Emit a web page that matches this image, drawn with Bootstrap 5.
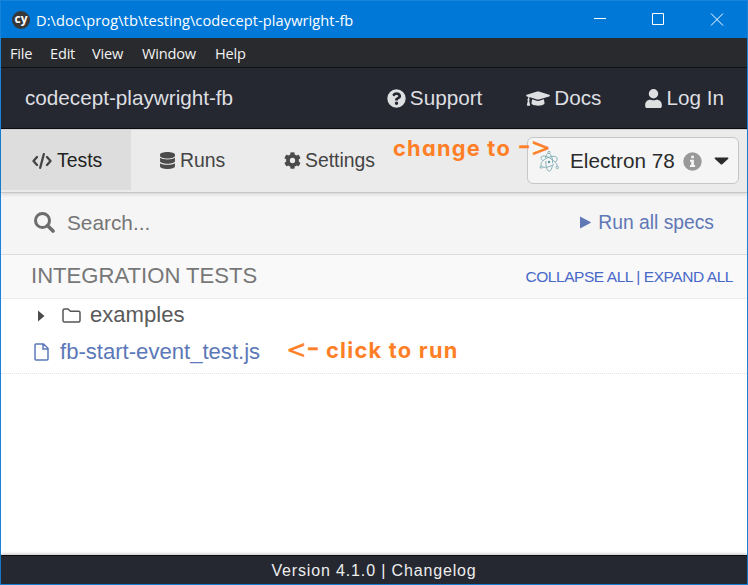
<!DOCTYPE html>
<html lang="en">
<head>
<meta charset="utf-8">
<title>codecept-playwright-fb</title>
<link href="https://cdn.jsdelivr.net/npm/bootstrap@5.3.0/dist/css/bootstrap.min.css" rel="stylesheet">
<style>
html,body{height:100%}
body{font-family:"Liberation Sans",Arial,sans-serif;line-height:1;overflow:hidden;white-space:nowrap}
svg{display:block;flex:none}
a{text-decoration:none;color:inherit}
.app-window{height:585px;border:1px solid #1883d9;border-top-width:0;background:#fff}
.title-bar{height:38px;background:#0078d7;border-top:1px solid #1883d9;color:#fff;font:14.6px "Open Sans","Noto Sans",sans-serif;padding-left:11px}
.path-label{margin-left:6px;width:318px;letter-spacing:.07px}
.window-controls{margin-right:23px;margin-top:-2px}
.menu-strip{height:29px;background:#292a2d;color:#f2f2f2;font:14.6px "Open Sans","Noto Sans",sans-serif;padding:1px 0 0 9px;letter-spacing:-.2px}
.m1{width:40px}.m2{width:42px}.m3{width:50px}.m4{width:73px}
.top-header{height:62px;background:#252831;border-top:1px solid #101114;border-bottom:1px solid #0c0d12;color:#dedfe1;font-size:20.7px;padding:1px 23px 0 24px}
.header-link{margin-left:44px}
.tab-strip{height:64px;background:#ebebeb;border-top:1px solid #d0d0d0;border-bottom:1px solid #c6c6c6;color:#444;font-size:19.4px;box-shadow:0 1px 4px rgba(0,0,0,.15);position:relative}
.tab-item{height:60px;padding-top:1px}
.tab-tests{width:130px;background:#dddddd;color:#222;padding-left:31px}
.tab-runs{width:123px;padding-left:29px}
.tab-settings{padding-left:30px}
.browser-box{width:212px;height:47px;margin-top:7px;border:1px solid #c6c6c6;border-radius:6px;background:#f5f5f5;color:#2b2b2b;font-size:20.7px;margin-right:8px;padding:1px 0 0 11px}
.search-row{height:62px;background:#f5f5f5;border-bottom:1px solid #dcdcdc;font-size:20.8px;color:#757575;padding:0 33px 2px 33px}
.search-text{margin-left:12px;padding-top:2px}
.run-all{font-size:19.3px;color:#6078b6}
.group-head{height:44px;background:#f9f9f9;border-bottom:1px solid #ececec;color:#777;font-size:22.1px;padding:0 14px 0 30px}
.toggles{font-size:15.5px;color:#4868c8;letter-spacing:-.44px}
.spec-list{height:75px;border-bottom:1px dotted #e2e2e2;font-size:22.1px}
.folder-row{height:33px;color:#5a5a5a;padding-left:36px}
.file-row{height:39px;color:#5b78b8;padding-left:33px}
.file-name{margin-left:11px;padding-top:2px}
.hint{color:#ff7f27;font:700 21.8px/26px Inter,sans-serif;font-feature-settings:"cv11","calt" 0;letter-spacing:1.25px}
.arrow-line{font-weight:400;font-size:29px;line-height:20px;letter-spacing:0;display:inline-block;-webkit-text-stroke:.5px #ff7f27}
.arrow-tip{font:400 24px/20px "DejaVu Sans",sans-serif;letter-spacing:0;-webkit-text-stroke:.5px #ff7f27}
.hint-browser{position:absolute;left:392px;top:5px}
.hint-file{margin-left:26px;margin-top:-4px}
.foot-bar{height:29px;background:#252831;border-top:1px solid #0c0d12;color:#eee;font-size:16px;letter-spacing:.85px;padding-top:1px;box-shadow:0 -1px 3px rgba(0,0,0,.25)}
</style>
<script src="https://cdn.jsdelivr.net/npm/bootstrap@5.3.0/dist/js/bootstrap.bundle.min.js"></script>
</head>
<body>
<div class="app-window d-flex flex-column">
  <div class="title-bar d-flex align-items-center">
    <svg width="18" height="18" viewBox="0 0 18 18"><circle cx="9" cy="9" r="9" fill="#383838"/><text x="9" y="12.3" text-anchor="middle" font-family="Open Sans" font-weight="700" font-size="12" fill="#fff">cy</text></svg>
    <span class="path-label">D:\doc\prog\tb\testing\codecept-playwright-fb</span>
    <svg class="window-controls ms-auto" width="130" height="14" fill="none" stroke="#fff"><path d="M0 6.500h12M58.500 1.500h11v11h-11zM117 1.500l12 12M129 1.500l-12 12"/></svg>
  </div>
  <div class="menu-strip d-flex align-items-center"><span class="m1">File</span><span class="m2">Edit</span><span class="m3">View</span><span class="m4">Window</span><span>Help</span></div>
  <header class="top-header d-flex align-items-center">
    <span>codecept-playwright-fb</span>
    <a class="ms-auto d-flex align-items-center" href="#"><svg class="me-1" width="19" height="19" viewBox="0 0 512 512" fill="currentColor"><path d="M504 256a248 248 0 1 1-496 0 248 248 0 0 1 496 0zM262.700 90c-54.500 0-89.300 23-116.500 63.800-3.500 5.300-2.400 12.400 2.700 16.200l34.700 26.300c5.200 3.900 12.600 3 16.700-2.100 17.900-22.700 30.100-35.800 57.300-35.800 20.400 0 45.700 13.100 45.700 33 0 15-12.400 22.700-32.500 34C247.100 238.500 216 255 216 296v4c0 6.600 5.400 12 12 12h56c6.600 0 12-5.400 12-12v-1.300c0-28.800 84.200-30 84.200-108 0-58.800-61-100.700-117.500-100.700zM256 338a46 46 0 1 0 0 92 46 46 0 0 0 0-92z"/></svg><span>Support</span></a>
    <a class="header-link d-flex align-items-center" href="#"><svg class="me-1" width="24" height="19" viewBox="0 0 640 512" fill="currentColor"><path d="M622 153 343 67c-15-4-31-4-46 0L18 153c-24 7-24 39 0 46l49 15c-11 13-17 29-18 47-10 6-17 16-17 28 0 11 6 20 14 26L20 430c-2 9 5 18 15 18h58c10 0 17-9 15-18L82 315c8-6 14-15 14-26s-6-21-15-27c1-15 8-29 21-38l195 60c9 3 27 7 46 0l279-85c24-7 24-39 0-46zM353 315c-31 9-55 4-66 0l-127-39-16 108c0 35 79 64 176 64s176-29 176-64l-16-108z"/></svg><span>Docs</span></a>
    <a class="header-link d-flex align-items-center" href="#"><svg class="me-1" width="17" height="19" viewBox="0 0 448 512" fill="currentColor"><path d="M224 256a128 128 0 1 0 0-256 128 128 0 0 0 0 256zm90 32h-17a174 174 0 0 1-146 0h-17C60 288 0 348 0 422v42c0 27 21 48 48 48h352c27 0 48-21 48-48v-42c0-74-60-134-134-134z"/></svg><span>Log In</span></a>
  </header>
  <nav class="tab-strip d-flex">
    <a class="tab-item tab-tests d-flex align-items-center" href="#"><svg width="20" height="16" viewBox="0 0 20 16" fill="none" stroke="#444" stroke-width="2.300" stroke-linecap="round" stroke-linejoin="round"><path d="M5 4 1.500 8 5 12M15 4l3.500 4L15 12M11.800 1.200 8.200 14.800"/></svg><span style="margin-left:5px">Tests</span></a>
    <a class="tab-item tab-runs d-flex align-items-center" href="#"><svg width="15" height="17" viewBox="0 0 448 512" fill="#4b4b4b"><path d="M448 73v46c0 40-100 73-224 73S0 159 0 119V73C0 33 100 0 224 0s224 33 224 73zm0 103v103c0 40-100 73-224 73S0 319 0 279V176c48 33 136 49 224 49s176-16 224-49zm0 160v103c0 40-100 73-224 73S0 479 0 439V336c48 33 136 49 224 49s176-16 224-49z"/></svg><span style="margin-left:5px">Runs</span></a>
    <a class="tab-item tab-settings d-flex align-items-center" href="#"><svg width="17" height="17" viewBox="0 0 512 512" fill="#4b4b4b"><path d="m487 316-42-25q6-35 0-70l42-25q8-5 6-14-18-54-56-96-6-7-15-2l-42 25q-27-24-61-35V25q0-9-9-12-55-12-110 0-9 3-9 12v49q-34 12-61 35L88 84q-9-5-15 2-38 42-56 96-2 9 6 14l43 25q-7 35 0 70l-43 25q-8 5-6 14 18 54 56 96 6 7 15 2l42-25q27 24 61 35v49q0 9 9 12 55 12 110 0 9-3 9-12v-49q34-12 61-35l42 25q9 5 15-2 38-42 56-96 2-9-6-14zM256 336a80 80 0 1 1 0-160 80 80 0 0 1 0 160z"/></svg><span style="margin-left:4px">Settings</span></a>
    <div class="browser-box ms-auto d-flex align-items-center">
      <svg width="21" height="23" viewBox="0 0 21 23" fill="none" stroke="#79aab2" stroke-width=".9"><g transform="translate(10 12)"><path d="M-7.500 3.500C-9 1-6-2-2-4 2-6 7-6.500 8-4 8.500-2.500 7.500-1 6.500 0M-6.500-1.500C-9-4-8-6-5.500-6-2-6 3-3 6 0 8 2 8.500 4 8 5M-3-1C-3.500 4-2 9 0 9.200 2 9 3 6 3.500 3M-3.500-4C-3-7-1.500-8.500-.500-8.500M1-8C3-6 3.800-2 3.500 1M-6 5C-3 6 2 4.500 5 2"/><circle r="1.200" fill="#5c98a4" stroke="none"/><g fill="#f5f5f5"><circle cx="0" cy="-9.500" r="1.200"/><circle cx="-7.800" cy="5" r="1.200"/><circle cx="8.300" cy="5.500" r="1.200"/></g></g></svg>
      <span style="margin-left:10px">Electron 78</span>
      <svg style="margin-left:8px" width="19" height="19" viewBox="0 0 19 19"><circle cx="9.500" cy="9.500" r="9.200" fill="#999"/><path fill="#f5f5f5" d="M8.200 3.700h2.700v2.600H8.200zM7 7.800h3.900v5.100h1.200v2H7v-2h1.200V9.700H7z"/></svg>
      <svg style="margin-left:12px" width="15" height="8" viewBox="0 0 15 8" fill="#2b2b2b"><path d="M1 .500h13q1 .500 0 1.500L8 7.500H7L1 2Q0 1 1 .500z"/></svg>
    </div>
    <div class="hint hint-browser">change to <span class="arrow-line">-</span><span class="arrow-tip">&gt;</span></div>
  </nav>
  <div class="search-row d-flex align-items-center">
    <svg width="21" height="21" viewBox="0 0 21 21" fill="none" stroke="#6d6d6d"><circle cx="8.500" cy="8.500" r="7" stroke-width="3"/><path d="m13.500 13.500 5.500 5.500" stroke-width="3.600" stroke-linecap="round"/></svg>
    <span class="search-text">Search...</span>
    <a class="run-all ms-auto d-flex align-items-center" href="#"><svg width="12" height="13" viewBox="0 0 12 13" fill="currentColor"><path d="M1 .500 11.500 6q.500.500 0 1L1 12.500z"/></svg><span style="margin-left:7px">Run all specs</span></a>
  </div>
  <div class="group-head d-flex align-items-center justify-content-between"><span>INTEGRATION TESTS</span><span class="toggles">COLLAPSE ALL | EXPAND ALL</span></div>
  <div class="spec-list">
    <div class="folder-row d-flex align-items-center"><svg width="8" height="12" viewBox="0 0 8 12" fill="#4b4b4b"><path d="M1 .500 7.500 6 1 11.500z"/></svg><svg style="margin-left:17px" width="19" height="15" viewBox="0 0 19 15" fill="none" stroke="#555" stroke-width="1.500"><path d="M1 2.500Q1 1 2.500 1H6l2.500 2.200h8Q18 3.200 18 4.700v7.800q0 1.500-1.500 1.500h-14Q1 14 1 12.500z"/></svg><span style="margin-left:9px">examples</span></div>
    <div class="file-row d-flex align-items-center"><svg width="15" height="18" viewBox="0 0 15 18" fill="none" stroke="currentColor" stroke-width="1.500"><path d="M2 1h7.500L14 5.300V16q0 1-1 1H2q-1 0-1-1V2q0-1 1-1zM9 1v5h5"/></svg><span class="file-name">fb-start-event_test.js</span><span class="hint hint-file"><span class="arrow-tip">&lt;</span><span class="arrow-line">-</span> click to run</span></div>
  </div>
  <footer class="foot-bar mt-auto d-flex align-items-center justify-content-center"><span>Version 4.1.0 | Changelog</span></footer>
</div>
</body>
</html>
